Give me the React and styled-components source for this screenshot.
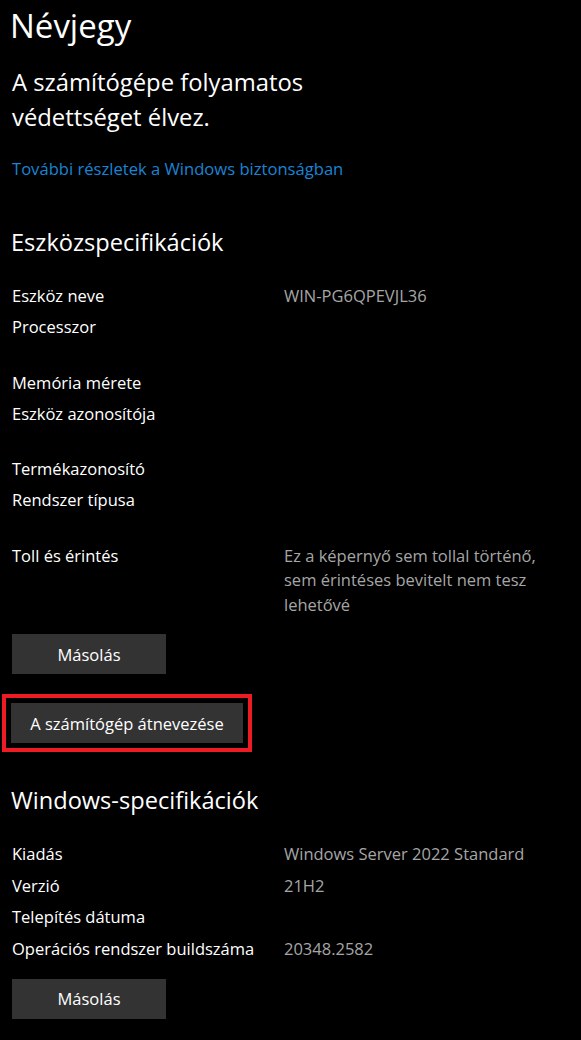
import React from "react";
import styled, { createGlobalStyle } from "styled-components";

const GlobalStyle = createGlobalStyle`
  html, body {
    margin: 0;
    padding: 0;
    background-color: #000000;
  }
  body {
    font-family: "Segoe UI", "Open Sans", "Noto Sans", sans-serif;
    color: #ffffff;
  }
`;

const Page = styled.div`
  width: 581px;
  min-height: 1040px;
  box-sizing: border-box;
  padding: 4px 12px 0 12px;
  display: flex;
  flex-direction: column;
  align-items: flex-start;
`;

const PageTitle = styled.h1`
  margin: 0 0 0 -2px;
  font-size: 33px;
  font-weight: 400;
  line-height: 44px;
`;

const Status = styled.div`
  margin-top: 17px;
  font-size: 23.8px;
  line-height: 35px;
`;

const Link = styled.a`
  margin-top: 22px;
  font-size: 16.6px;
  line-height: 24px;
  color: #1a84d4;
  text-decoration: none;
`;

const SectionTitle = styled.h2`
  margin: ${(p) => p.$top || 0}px 0 0 -1px;
  font-size: 23.6px;
  font-weight: 400;
  line-height: 32px;
`;

const SpecList = styled.div`
  margin-top: 26px;
  width: 100%;
  display: flex;
  flex-direction: column;
  gap: ${(p) => p.$gap || 6.5}px;
`;

const SpecRow = styled.div`
  display: grid;
  grid-template-columns: 272px 1fr;
  font-size: 16.5px;
  line-height: 24.5px;
  min-height: ${(p) => (p.$lines || 1) * 24.5}px;
`;

const Label = styled.div`
  color: #ffffff;
  white-space: nowrap;
`;

const Value = styled.div`
  color: #a6a6a6;
  max-width: 270px;
`;

const Button = styled.button`
  height: 40px;
  width: 154px;
  padding: 0;
  border: none;
  background-color: #333333;
  color: #ffffff;
  font-family: inherit;
  font-size: 16.5px;
  cursor: pointer;
`;

const CopyButton = styled(Button)`
  margin-top: ${(p) => p.$top || 0}px;
`;

const Highlight = styled.div`
  margin: 20px 0 0 -10px;
  padding: 5px;
  border: 4px solid #ed1c24;
  display: flex;
`;

const RenameButton = styled(Button)`
  width: 232px;
`;

const deviceSpecs = [
  { label: "Eszköz neve", value: "WIN-PG6QPEVJL36" },
  { label: "Processzor", value: "", lines: 2 },
  { label: "Memória mérete", value: "" },
  { label: "Eszköz azonosítója", value: "", lines: 2 },
  { label: "Termékazonosító", value: "" },
  { label: "Rendszer típusa", value: "", lines: 2 },
  {
    label: "Toll és érintés",
    value: "Ez a képernyő sem tollal történő, sem érintéses bevitelt nem tesz lehetővé",
    lines: 3,
  },
];

const windowsSpecs = [
  { label: "Kiadás", value: "Windows Server 2022 Standard" },
  { label: "Verzió", value: "21H2" },
  { label: "Telepítés dátuma", value: "" },
  { label: "Operációs rendszer buildszáma", value: "20348.2582" },
];

const App = () => {
  return (
    <>
      <GlobalStyle />
      <Page>
        <PageTitle>Névjegy</PageTitle>
        <Status>
          A számítógépe folyamatos
          <br />
          védettséget élvez.
        </Status>
        <Link href="#">További részletek a Windows biztonságban</Link>

        <SectionTitle $top={45}>Eszközspecifikációk</SectionTitle>
        <SpecList>
          {deviceSpecs.map((s) => (
            <SpecRow key={s.label} $lines={s.lines}>
              <Label>{s.label}</Label>
              <Value>{s.value}</Value>
            </SpecRow>
          ))}
        </SpecList>
        <CopyButton $top={17}>Másolás</CopyButton>
        <Highlight>
          <RenameButton>A számítógép átnevezése</RenameButton>
        </Highlight>

        <SectionTitle $top={32}>Windows-specifikációk</SectionTitle>
        <SpecList $gap={7.2}>
          {windowsSpecs.map((s) => (
            <SpecRow key={s.label}>
              <Label>{s.label}</Label>
              <Value>{s.value}</Value>
            </SpecRow>
          ))}
        </SpecList>
        <CopyButton $top={17}>Másolás</CopyButton>
      </Page>
    </>
  );
};

export default App;
